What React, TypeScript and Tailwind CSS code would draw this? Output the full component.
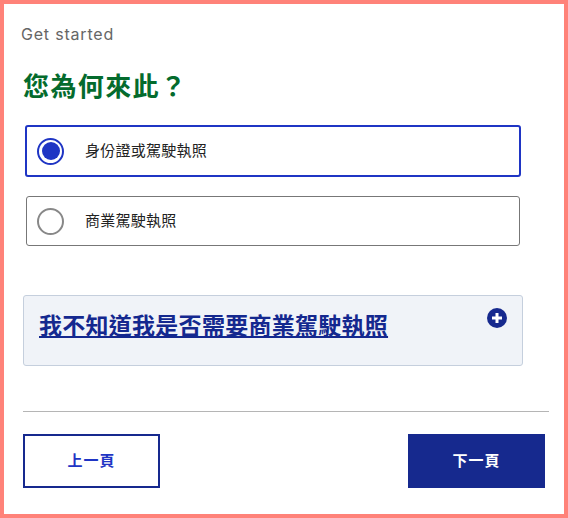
const cjk = "font-['Liberation_Sans','Noto_Sans_CJK_TC',sans-serif]";
export default function App() {
  return (
    <div className={`w-[568px] h-[518px] bg-white border-4 border-[#ff8279] flex flex-col ${cjk}`}>
      <div className="pl-[17px] pt-[20px] text-[16px] leading-[20px] text-[#666] tracking-[0.8px] font-['Inter',sans-serif]">Get started</div>
      <h1 className="pl-[19px] mt-[27px] text-[26px] leading-[32px] font-bold text-[#046b2d] tracking-[1.4px]">您為何來此？</h1>
      <div className="mt-[22px] ml-[21px] w-[496px] h-[52px] border-2 border-[#1f35c4] rounded-[3px] flex items-center pl-[10px]">
        <span className="w-[27px] h-[27px] rounded-full border-2 border-[#1f35c4] flex items-center justify-center"><span className="w-[18px] h-[18px] rounded-full bg-[#1f35c4]" /></span>
        <span className="ml-[21px] text-[15px] tracking-[0.25px] text-[#222]">身份證或駕駛執照</span>
      </div>
      <div className="mt-[19px] ml-[22px] w-[494px] h-[50px] border border-[#777] rounded-[3px] flex items-center pl-[10px]">
        <span className="w-[27px] h-[27px] rounded-full border-2 border-[#888]" />
        <span className="ml-[21px] text-[15px] tracking-[0.25px] text-[#222]">商業駕駛執照</span>
      </div>
      <div className="mt-[49px] ml-[19px] w-[500px] h-[71px] bg-[#f0f3f8] border border-[#c5cfdd] rounded-[3px] flex justify-between pl-[15px] pr-[15px] pt-[16px]">
        <span className="text-[23px] leading-[28px] font-bold underline text-[#14288f] tracking-[0.27px]">我不知道我是否需要商業駕駛執照</span>
        <svg width="20" height="20" viewBox="0 0 20 20" className="mt-[-4px]"><circle cx="10" cy="10" r="10" fill="#16298e"/><path d="M10 5v10M5 10h10" stroke="#fff" strokeWidth="3"/></svg>
      </div>
      <div className="mt-[45px] ml-[19px] w-[526px] border-t border-[#b5b5b5]" />
      <div className="mt-[22px] ml-[19px] w-[522px] flex justify-between">
        <button className="w-[137px] h-[54px] border-2 border-[#16298e] text-[#1f35c4] text-[15px] tracking-[1px] font-bold">上一頁</button>
        <button className="w-[137px] h-[54px] bg-[#16298e] text-white text-[15px] tracking-[1px] font-bold">下一頁</button>
      </div>
    </div>
  );
}
